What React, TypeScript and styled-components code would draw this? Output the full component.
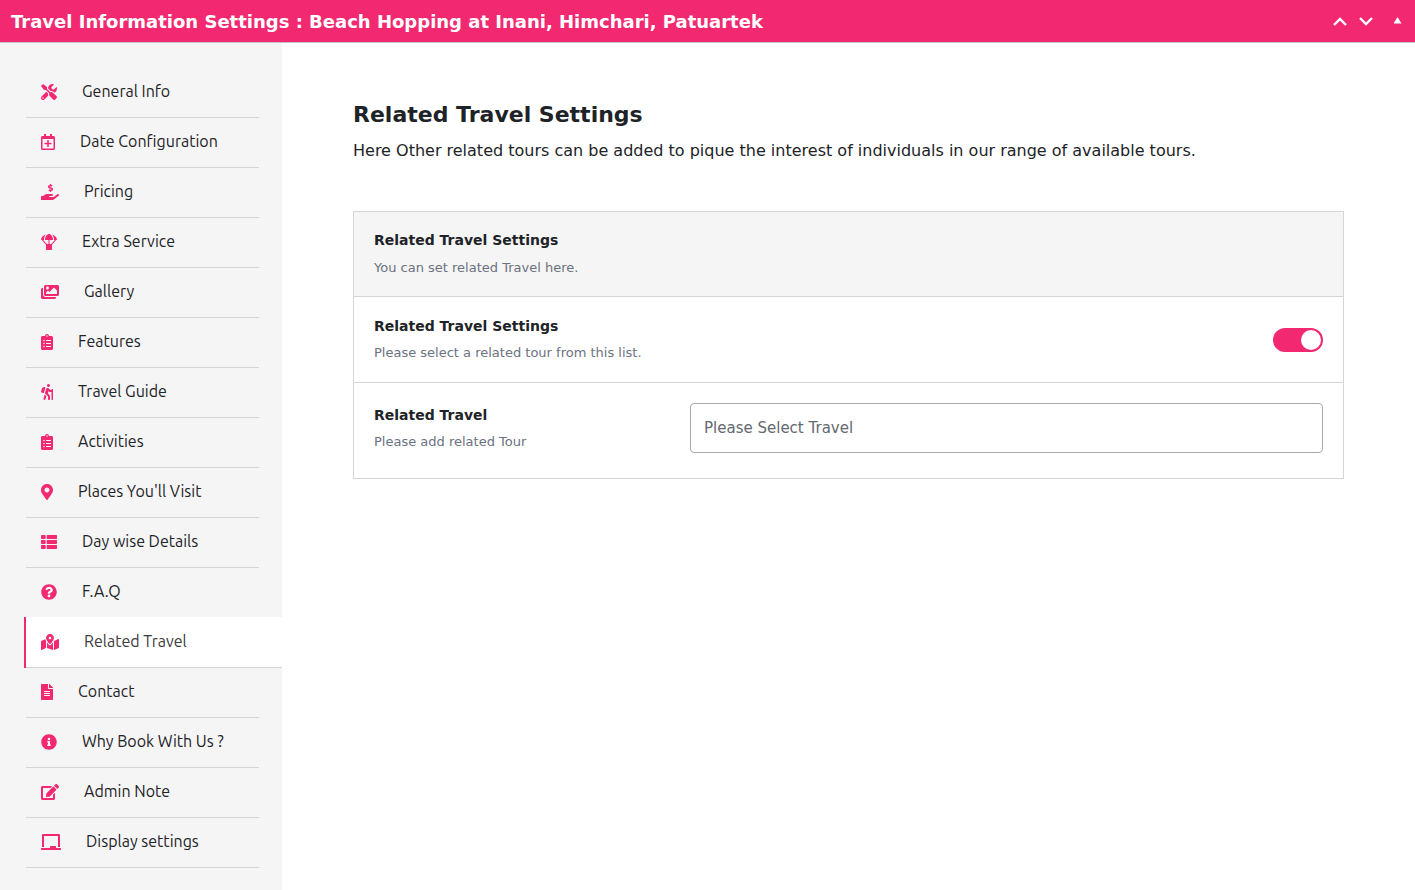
import React, { useState } from 'react';
import styled, { createGlobalStyle } from 'styled-components';
import type { IconType } from 'react-icons';
import {
  FaTools,
  FaRegCalendarPlus,
  FaHandHoldingUsd,
  FaParachuteBox,
  FaImages,
  FaClipboardList,
  FaHiking,
  FaMapMarkerAlt,
  FaThList,
  FaQuestionCircle,
  FaMapMarkedAlt,
  FaFileAlt,
  FaInfoCircle,
  FaEdit,
  FaChalkboard,
} from 'react-icons/fa';

const pink = '#f22971';
const line = '#d5d5d5';
const shade = '#f5f5f5';
const ink = '#1d2327';

const GlobalStyle = createGlobalStyle`
  *, *::before, *::after { box-sizing: border-box; }
  body {
    margin: 0;
    background: #fff;
    color: ${ink};
    font-family: "DejaVu Sans", sans-serif;
  }
`;

const Page = styled.div`
  display: flex;
  flex-direction: column;
  min-height: 100vh;
`;

const TitleBar = styled.header`
  display: flex;
  align-items: center;
  justify-content: space-between;
  height: 43px;
  padding: 0 7px 0 11px;
  background: ${pink};
  border-bottom: 1px solid #c3c4c7;
`;

const BoxTitle = styled.h1`
  margin: 0;
  padding-top: 2px;
  color: #fff;
  font-size: 18px;
  line-height: 24px;
`;

const BarActions = styled.div`
  display: flex;
  align-items: center;
`;

const BarButton = styled.button`
  display: grid;
  place-items: center;
  width: 26px;
  height: 26px;
  padding: 0;
  border: 0;
  background: transparent;
  color: #fff;
  cursor: pointer;

  &:last-child {
    width: 20px;
    margin-left: 9px;
  }
`;

const Body = styled.div`
  display: flex;
  flex: 1;
`;

const Sidebar = styled.nav`
  flex: 0 0 282px;
  padding: 25px 0 22px 24px;
  background: ${shade};
`;

const Tabs = styled.ul`
  margin: 0;
  padding: 0;
  list-style: none;
`;

/* The active tab runs to the sidebar's edge and covers the rule above it. */
const Tab = styled.li<{ $active: boolean }>`
  margin-top: ${({ $active }) => ($active ? -1 : 0)}px;
  margin-right: ${({ $active }) => ($active ? 0 : 23)}px;
  border-left: 2px solid ${({ $active }) => ($active ? pink : 'transparent')};
`;

const TabLink = styled.a<{ $active: boolean }>`
  display: flex;
  align-items: center;
  gap: 25px;
  height: ${({ $active }) => ($active ? 51 : 50)}px;
  padding: ${({ $active }) => ($active ? 1 : 0)}px 0 2px 15px;
  border-bottom: 1px solid ${line};
  background: ${({ $active }) => ($active ? '#fff' : 'transparent')};
  color: ${({ $active }) => ($active ? '#3c3c3c' : ink)};
  font-family: Ubuntu, "Noto Sans", sans-serif;
  font-size: 16px;
  line-height: 24px;
  text-decoration: none;
`;

const TabIcon = styled.span<{ $width: number }>`
  display: flex;
  flex: none;
  width: ${({ $width }) => $width}px;
  height: 16px;
  color: ${pink};

  svg {
    width: 100%;
    height: 100%;
  }
`;

const TabText = styled.span`
  padding-bottom: 2px;
`;

const Content = styled.main`
  flex: 1;
  min-width: 0;
  padding: 58px 71px;
`;

const PageTitle = styled.h2`
  margin: 0;
  font-size: 22px;
  line-height: 28px;
`;

const Lead = styled.p`
  margin: 10px 0 48px;
  font-size: 16px;
  line-height: 24px;
`;

const Panel = styled.section`
  border: 1px solid ${line};
`;

const PanelHeader = styled.header`
  display: flex;
  flex-direction: column;
  gap: 4px;
  padding: 16px 20px;
  background: ${shade};
`;

const Row = styled.div`
  display: flex;
  align-items: center;
  justify-content: space-between;
  gap: 24px;
  padding: 17px 20px;
  border-top: 1px solid ${line};
`;

const FieldRow = styled(Row)`
  align-items: flex-start;
  padding: 20px 20px 24px;
`;

const Caption = styled.div`
  display: flex;
  flex-direction: column;
  gap: 3px;
`;

const Label = styled.label`
  font-size: 14px;
  font-weight: 700;
  line-height: 24px;
`;

const PanelTitle = styled.h3`
  margin: 0;
  font-size: 14px;
  line-height: 24px;
`;

const Hint = styled.span`
  color: #6b7280;
  font-size: 13px;
  line-height: 24px;
`;

const Switch = styled.input`
  appearance: none;
  flex: none;
  width: 50px;
  height: 24px;
  margin: 0;
  padding: 2px;
  border-radius: 12px;
  background: #ccc;
  cursor: pointer;

  &::before {
    content: '';
    display: block;
    width: 20px;
    height: 20px;
    border-radius: 50%;
    background: #fff;
  }

  &:checked {
    background: ${pink};
  }

  &:checked::before {
    margin-left: auto;
  }
`;

const TravelInput = styled.input`
  width: 66.7%;
  height: 50px;
  padding: 0 13px;
  border: 1px solid #aaa;
  border-radius: 4px;
  background: #fff;
  color: ${ink};
  font-family: inherit;
  font-size: 15px;

  &::placeholder {
    color: #646970;
    opacity: 1;
  }
`;

const tabs: { label: string; icon: IconType; width: number }[] = [
  { label: 'General Info', icon: FaTools, width: 16 },
  { label: 'Date Configuration', icon: FaRegCalendarPlus, width: 14 },
  { label: 'Pricing', icon: FaHandHoldingUsd, width: 18 },
  { label: 'Extra Service', icon: FaParachuteBox, width: 16 },
  { label: 'Gallery', icon: FaImages, width: 18 },
  { label: 'Features', icon: FaClipboardList, width: 12 },
  { label: 'Travel Guide', icon: FaHiking, width: 12 },
  { label: 'Activities', icon: FaClipboardList, width: 12 },
  { label: "Places You'll Visit", icon: FaMapMarkerAlt, width: 12 },
  { label: 'Day wise Details', icon: FaThList, width: 16 },
  { label: 'F.A.Q', icon: FaQuestionCircle, width: 16 },
  { label: 'Related Travel', icon: FaMapMarkedAlt, width: 18 },
  { label: 'Contact', icon: FaFileAlt, width: 12 },
  { label: 'Why Book With Us ?', icon: FaInfoCircle, width: 16 },
  { label: 'Admin Note', icon: FaEdit, width: 18 },
  { label: 'Display settings', icon: FaChalkboard, width: 20 },
];

export default function App() {
  const [active, setActive] = useState('Related Travel');

  return (
    <Page>
      <GlobalStyle />
      <TitleBar>
        <BoxTitle>Travel Information Settings : Beach Hopping at Inani, Himchari, Patuartek</BoxTitle>
        <BarActions>
          <BarButton type="button" aria-label="Move up">
            <svg width="14" height="9" viewBox="0 0 14 9" fill="none" stroke="currentColor" strokeWidth="2.4">
              <path d="M1 8l6-6 6 6" />
            </svg>
          </BarButton>
          <BarButton type="button" aria-label="Move down">
            <svg width="14" height="9" viewBox="0 0 14 9" fill="none" stroke="currentColor" strokeWidth="2.4">
              <path d="M1 1l6 6 6-6" />
            </svg>
          </BarButton>
          <BarButton type="button" aria-label="Toggle panel">
            <svg width="8" height="8" viewBox="0 0 8 8" fill="currentColor">
              <path d="M-.5 6.500l4-6.500 4 6.500z" />
            </svg>
          </BarButton>
        </BarActions>
      </TitleBar>
      <Body>
        <Sidebar aria-label="Travel settings">
          <Tabs>
            {tabs.map(({ label, icon: Icon, width }) => (
              <Tab key={label} $active={label === active}>
                <TabLink href="#" $active={label === active} onClick={() => setActive(label)}>
                  <TabIcon $width={width}>
                    <Icon aria-hidden="true" />
                  </TabIcon>
                  <TabText>{label}</TabText>
                </TabLink>
              </Tab>
            ))}
          </Tabs>
        </Sidebar>
        <Content>
          <PageTitle>Related Travel Settings</PageTitle>
          <Lead>
            Here Other related tours can be added to pique the interest of individuals in our range of available
            tours.
          </Lead>
          <Panel>
            <PanelHeader>
              <PanelTitle>Related Travel Settings</PanelTitle>
              <Hint>You can set related Travel here.</Hint>
            </PanelHeader>
            <Row>
              <Caption>
                <Label htmlFor="related-toggle">Related Travel Settings</Label>
                <Hint>Please select a related tour from this list.</Hint>
              </Caption>
              <Switch id="related-toggle" type="checkbox" role="switch" defaultChecked />
            </Row>
            <FieldRow>
              <Caption>
                <Label htmlFor="related-travel">Related Travel</Label>
                <Hint>Please add related Tour</Hint>
              </Caption>
              <TravelInput id="related-travel" type="text" placeholder="Please Select Travel" />
            </FieldRow>
          </Panel>
        </Content>
      </Body>
    </Page>
  );
}
